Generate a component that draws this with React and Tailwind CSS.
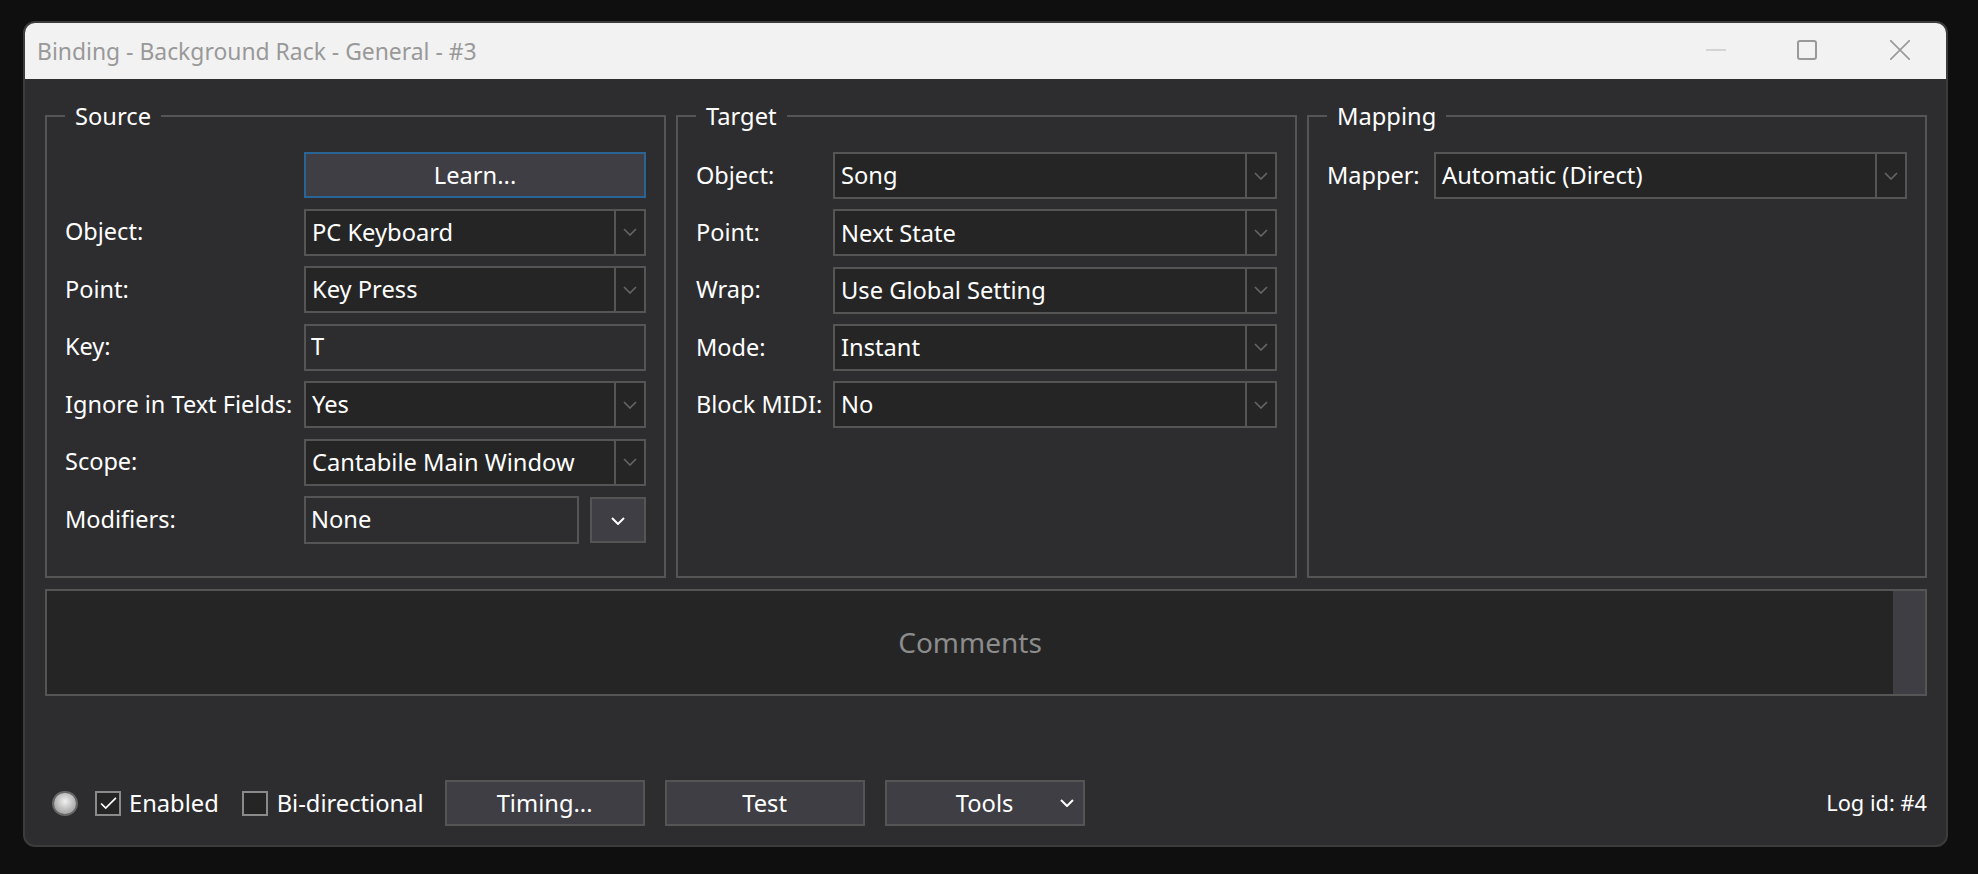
import React from 'react'

const Chevron = ({ className, width = 1.6 }) => (
  <svg viewBox="0 0 14 8" className={className} fill="none" stroke="currentColor" strokeWidth={width}>
    <path d="M1 1l6 6 6-6" />
  </svg>
)

const Select = ({ value }) => (
  <div className="flex flex-1 h-[47px] items-center border-2 border-[#555555] bg-[#252525]">
    <div className="flex-1 pl-[6px] pt-[1px] whitespace-nowrap">{value}</div>
    <div className="flex h-full w-[30px] items-center justify-center border-l-2 border-[#555555] text-[#666666]">
      <Chevron className="w-[14px] h-[8px]" />
    </div>
  </div>
)

const Field = ({ value, className }) => (
  <div className={`flex items-center border-2 border-[#555555] pl-[5px] ${className}`}>{value}</div>
)

const Group = ({ title, gap = 'gap-[10.3px]', children }) => (
  <fieldset className="h-[477px] min-w-0 border-2 border-[#555555] px-[18px] pb-0 pt-[21px]">
    <legend className="px-[10px] h-[30px] leading-[30px]">{title}</legend>
    <div className={`flex flex-col ${gap}`}>{children}</div>
  </fieldset>
)

const Row = ({ label, labelWidth = 'w-[239px]', children }) => (
  <div className="flex items-center">
    <div className={`${labelWidth} shrink-0 whitespace-nowrap text-[23.5px]`}>{label}</div>
    {children}
  </div>
)

const Button = ({ children, className }) => (
  <button className={`h-[46px] border-2 border-[#555555] bg-[#3e3e44] pt-[1px] text-white ${className}`}>{children}</button>
)

export default function App() {
  return (
    <div className="h-screen bg-[#0f0f0f] pt-[21px] pl-[23px] font-['Noto_Sans',sans-serif] text-[23.7px] text-white overflow-hidden">
      <div className="flex h-[826px] w-[1925px] flex-col overflow-hidden rounded-[12px] border-2 border-[#3c3c3c] bg-[#2d2d30]">
        {/* title bar */}
        <div className="flex h-[56px] shrink-0 items-center justify-between bg-[#f2f2f2] pl-[12px]">
          <span className="pt-[2px] text-[22.9px] text-[#999999]">Binding - Background Rack - General - #3</span>
          <div className="mb-[2px] flex items-center text-[#999999]">
            <div className="h-[2px] w-[20px] bg-[#d4d4d4]" />
            <div className="ml-[71px] h-[20px] w-[20px] rounded-[3px] border-2 border-[#999999]" />
            <svg viewBox="0 0 20 20" className="ml-[73px] mr-[36px] h-[20px] w-[20px]" stroke="currentColor" strokeWidth="1.6">
              <path d="M0 0l20 20M20 0L0 20" />
            </svg>
          </div>
        </div>

        <div className="flex flex-1 flex-col pl-[20px] pr-[19px] pt-[22px]">
          <div className="grid grid-cols-[621px_621px_620px] gap-[10px]">
            <Group title="Source" gap="gap-[10.5px]">
              <Row>
                <button className="h-[46px] flex-1 border-2 border-[#2a6496] bg-[#3e3e44] pt-[1px]">Learn...</button>
              </Row>
              <Row label="Object:"><Select value="PC Keyboard" /></Row>
              <Row label="Point:"><Select value="Key Press" /></Row>
              <Row label="Key:"><Field value="T" className="h-[47px] flex-1" /></Row>
              <Row label="Ignore in Text Fields:"><Select value="Yes" /></Row>
              <Row label="Scope:"><Select value="Cantabile Main Window" /></Row>
              <Row label="Modifiers:">
                <Field value="None" className="h-[48px] w-[275px]" />
                <Button className="ml-[11px] flex w-[56px] items-center justify-center">
                  <Chevron className="w-[14px] h-[8px]" width={2} />
                </Button>
              </Row>
            </Group>

            <Group title="Target">
              <Row label="Object:" labelWidth="w-[137px]"><Select value="Song" /></Row>
              <Row label="Point:" labelWidth="w-[137px]"><Select value="Next State" /></Row>
              <Row label="Wrap:" labelWidth="w-[137px]"><Select value="Use Global Setting" /></Row>
              <Row label="Mode:" labelWidth="w-[137px]"><Select value="Instant" /></Row>
              <Row label="Block MIDI:" labelWidth="w-[137px]"><Select value="No" /></Row>
            </Group>

            <Group title="Mapping">
              <Row label="Mapper:" labelWidth="w-[107px]"><Select value="Automatic (Direct)" /></Row>
            </Group>
          </div>

          {/* comments */}
          <div className="mt-[11px] flex h-[107px] border-2 border-[#555555] bg-[#252525]">
            <div className="flex flex-1 items-center justify-center pb-[2px] text-[28px] text-[#8c8c8c]">Comments</div>
            <div className="w-[32px] bg-[#3e3e44]" />
          </div>

          {/* footer */}
          <div className="mt-[84px] flex items-center">
            <div className="ml-[7px] h-[25px] w-[26px] rounded-full border-2 border-[#666666] bg-[radial-gradient(circle_at_50%_40%,#f0f0f0,#8a8a8a)]" />
            <div className="ml-[17px] flex h-[25px] w-[26px] items-center justify-center border-2 border-[#8a8a8a] bg-[#252525]">
              <svg viewBox="0 0 18 14" className="h-[13px] w-[17px]" fill="none" stroke="white" strokeWidth="1.8">
                <path d="M1 7l5 5L17 1" />
              </svg>
            </div>
            <span className="ml-[8px] pt-[1px]">Enabled</span>
            <div className="ml-[23px] h-[25px] w-[26px] border-2 border-[#8a8a8a] bg-[#252525]" />
            <span className="ml-[9px] pt-[1px]">Bi-directional</span>
            <Button className="ml-[21px] w-[200px]">Timing...</Button>
            <Button className="ml-[20px] w-[200px]">Test</Button>
            <Button className="relative ml-[20px] w-[200px]">
              Tools
              <Chevron className="absolute right-[9px] top-[17px] w-[14px] h-[8px]" width={2} />
            </Button>
            <span className="ml-auto pt-[1px] text-[21.8px]">Log id: #4</span>
          </div>
        </div>
      </div>
    </div>
  )
}
